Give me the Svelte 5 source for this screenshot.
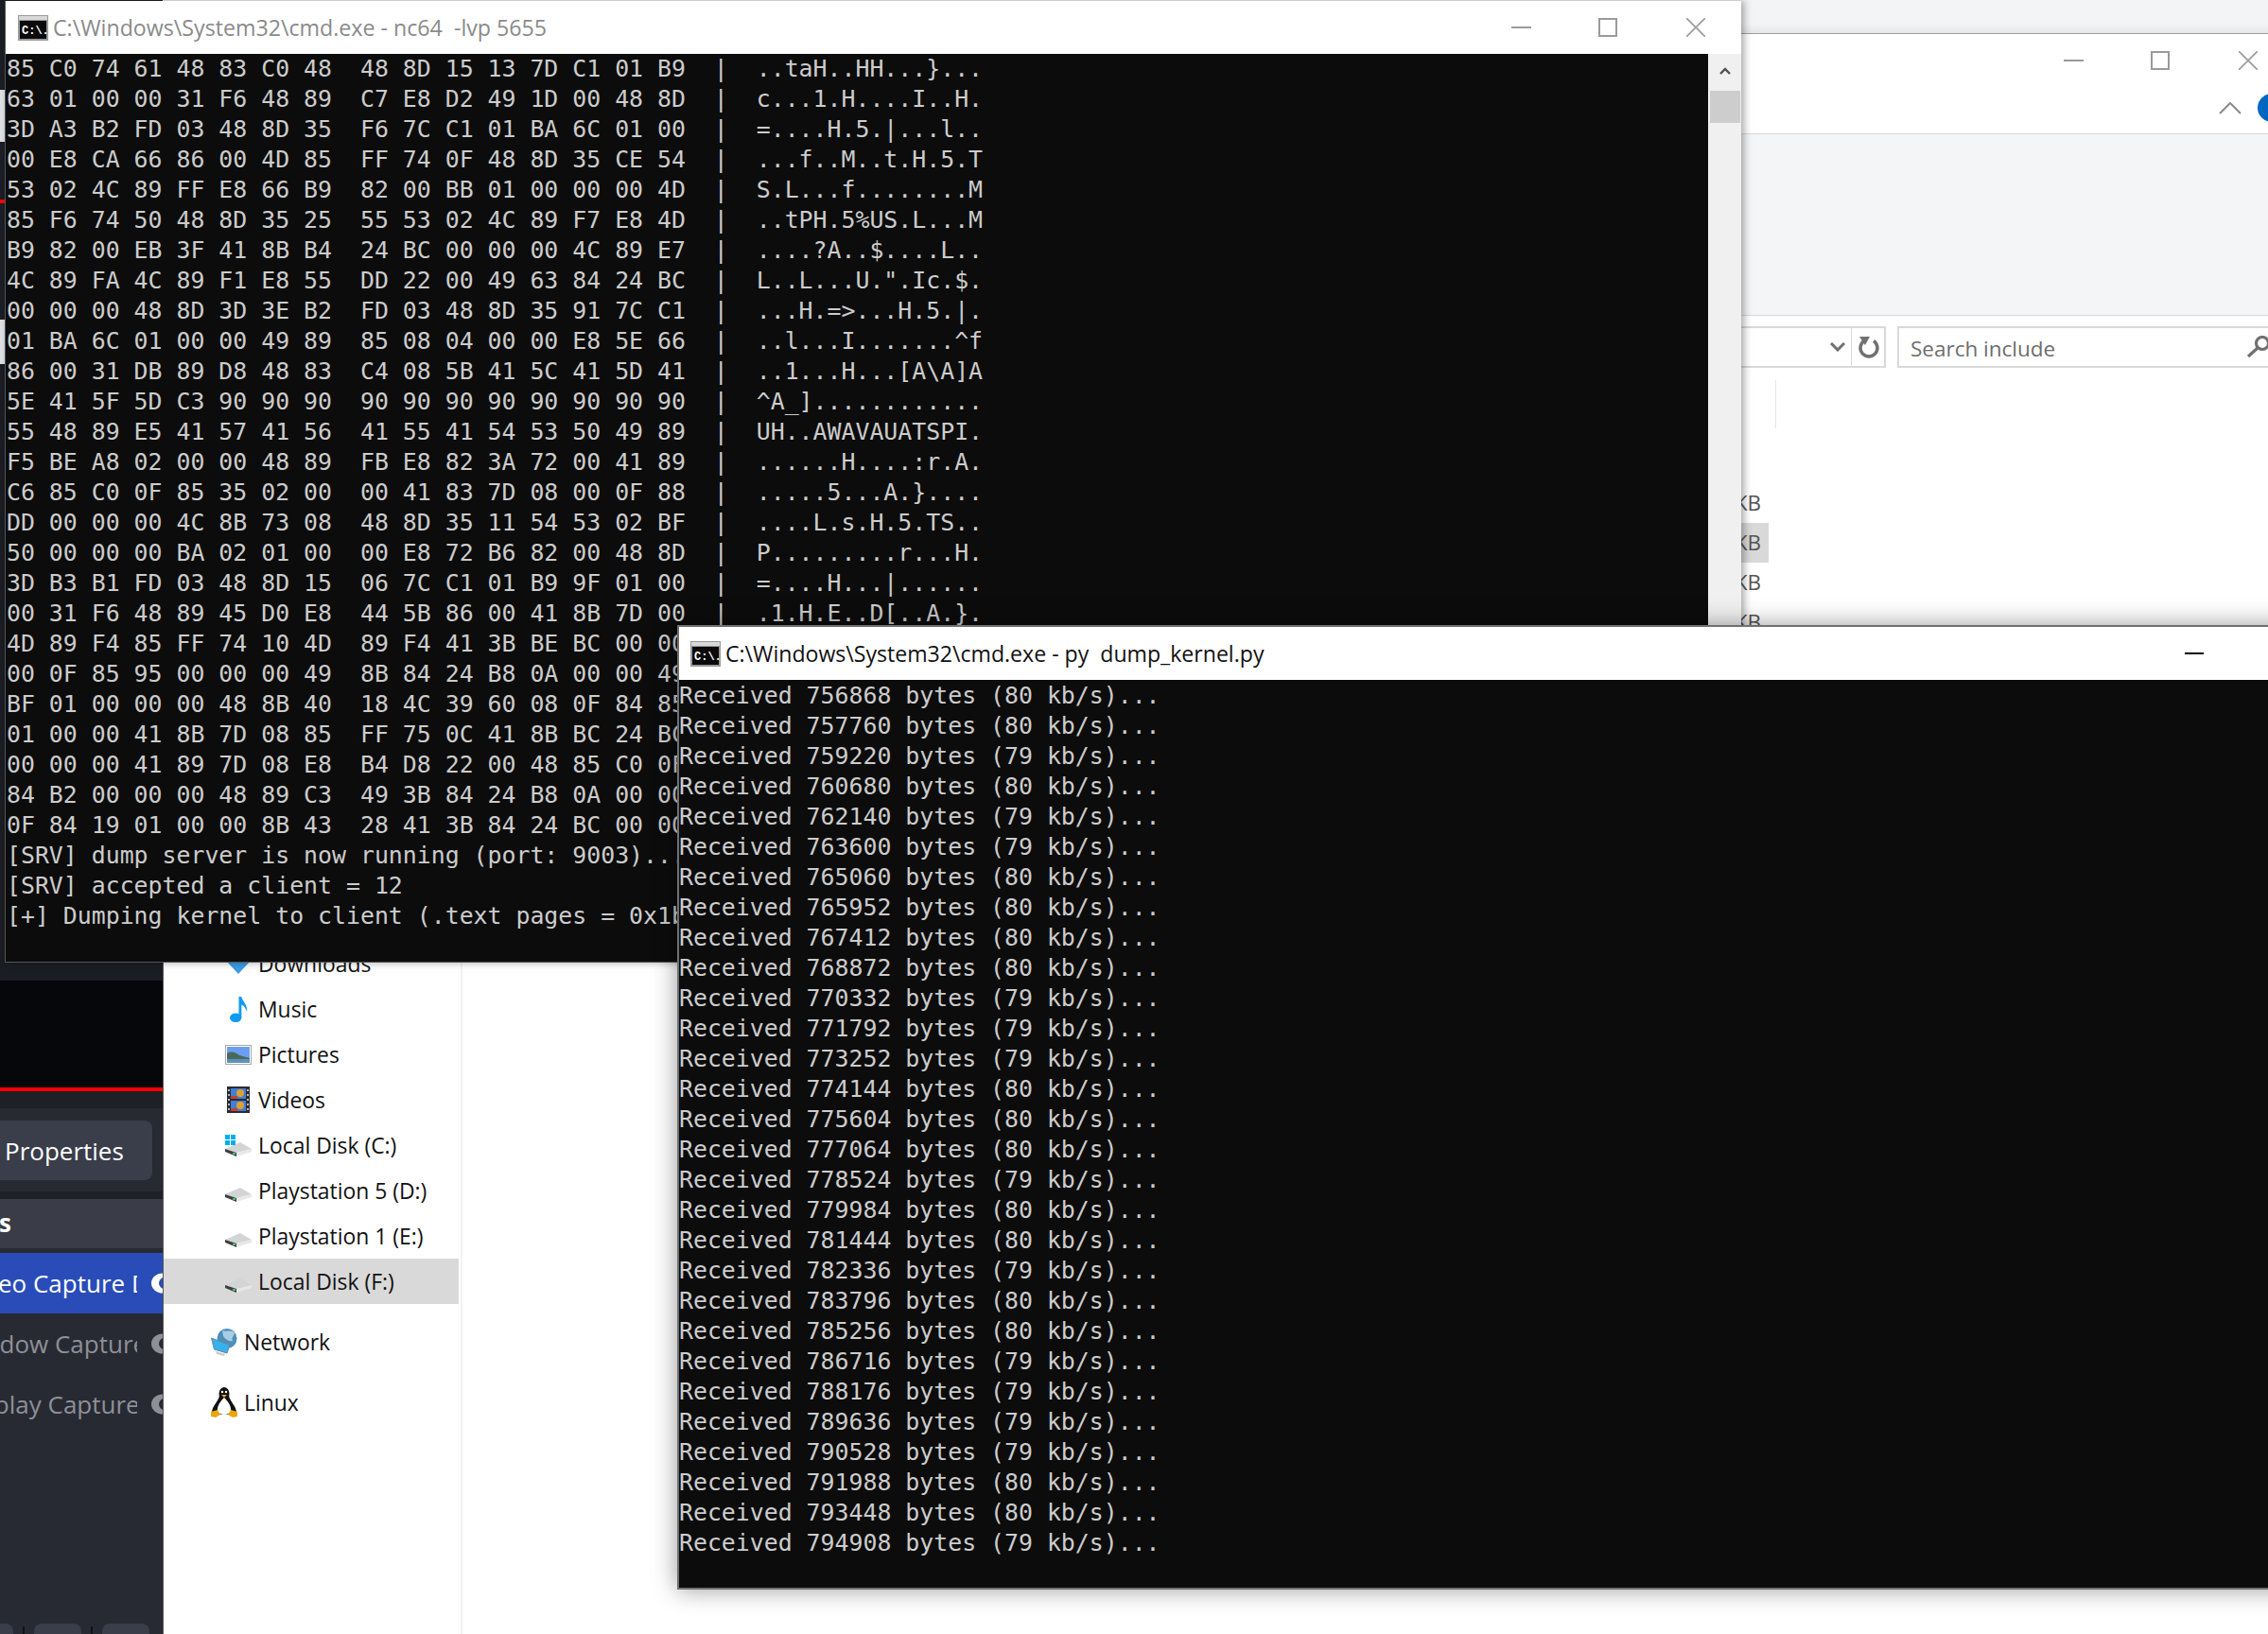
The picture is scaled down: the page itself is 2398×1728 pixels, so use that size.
<script>
	const hexRows = [
		['85 C0 74 61 48 83 C0 48  48 8D 15 13 7D C1 01 B9', '..taH..HH...}...'],
		['63 01 00 00 31 F6 48 89  C7 E8 D2 49 1D 00 48 8D', 'c...1.H....I..H.'],
		['3D A3 B2 FD 03 48 8D 35  F6 7C C1 01 BA 6C 01 00', '=....H.5.|...l..'],
		['00 E8 CA 66 86 00 4D 85  FF 74 0F 48 8D 35 CE 54', '...f..M..t.H.5.T'],
		['53 02 4C 89 FF E8 66 B9  82 00 BB 01 00 00 00 4D', 'S.L...f........M'],
		['85 F6 74 50 48 8D 35 25  55 53 02 4C 89 F7 E8 4D', '..tPH.5%US.L...M'],
		['B9 82 00 EB 3F 41 8B B4  24 BC 00 00 00 4C 89 E7', '....?A..$....L..'],
		['4C 89 FA 4C 89 F1 E8 55  DD 22 00 49 63 84 24 BC', 'L..L...U.".Ic.$.'],
		['00 00 00 48 8D 3D 3E B2  FD 03 48 8D 35 91 7C C1', '...H.=>...H.5.|.'],
		['01 BA 6C 01 00 00 49 89  85 08 04 00 00 E8 5E 66', '..l...I.......^f'],
		['86 00 31 DB 89 D8 48 83  C4 08 5B 41 5C 41 5D 41', '..1...H...[A\\A]A'],
		['5E 41 5F 5D C3 90 90 90  90 90 90 90 90 90 90 90', '^A_]............'],
		['55 48 89 E5 41 57 41 56  41 55 41 54 53 50 49 89', 'UH..AWAVAUATSPI.'],
		['F5 BE A8 02 00 00 48 89  FB E8 82 3A 72 00 41 89', '......H....:r.A.'],
		['C6 85 C0 0F 85 35 02 00  00 41 83 7D 08 00 0F 88', '.....5...A.}....'],
		['DD 00 00 00 4C 8B 73 08  48 8D 35 11 54 53 02 BF', '....L.s.H.5.TS..'],
		['50 00 00 00 BA 02 01 00  00 E8 72 B6 82 00 48 8D', 'P.........r...H.'],
		['3D B3 B1 FD 03 48 8D 15  06 7C C1 01 B9 9F 01 00', '=....H...|......'],
		['00 31 F6 48 89 45 D0 E8  44 5B 86 00 41 8B 7D 00', '.1.H.E..D[..A.}.'],
		['4D 89 F4 85 FF 74 10 4D  89 F4 41 3B BE BC 00 00', ''],
		['00 0F 85 95 00 00 00 49  8B 84 24 B8 0A 00 00 49', ''],
		['BF 01 00 00 00 48 8B 40  18 4C 39 60 08 0F 84 85', ''],
		['01 00 00 41 8B 7D 08 85  FF 75 0C 41 8B BC 24 BC', ''],
		['00 00 00 41 89 7D 08 E8  B4 D8 22 00 48 85 C0 0F', ''],
		['84 B2 00 00 00 48 89 C3  49 3B 84 24 B8 0A 00 00', ''],
		['0F 84 19 01 00 00 8B 43  28 41 3B 84 24 BC 00 00', '']
	];

	const srvLines = [
		'[SRV] dump server is now running (port: 9003)...',
		'[SRV] accepted a client = 12',
		'[+] Dumping kernel to client (.text pages = 0x1b00)'
	];

	const received = [
		[756868, 80], [757760, 80], [759220, 79], [760680, 80], [762140, 79], [763600, 79],
		[765060, 80], [765952, 80], [767412, 80], [768872, 80], [770332, 79], [771792, 79],
		[773252, 79], [774144, 80], [775604, 80], [777064, 80], [778524, 79], [779984, 80],
		[781444, 80], [782336, 79], [783796, 80], [785256, 80], [786716, 79], [788176, 79],
		[789636, 79], [790528, 79], [791988, 80], [793448, 80], [794908, 79]
	];

	const navItems = [
		{ name: 'Downloads', icon: 'downloads' },
		{ name: 'Music', icon: 'music' },
		{ name: 'Pictures', icon: 'pictures' },
		{ name: 'Videos', icon: 'videos' },
		{ name: 'Local Disk (C:)', icon: 'system' },
		{ name: 'Playstation 5 (D:)', icon: 'drive' },
		{ name: 'Playstation 1 (E:)', icon: 'drive' },
		{ name: 'Local Disk (F:)', icon: 'drive', selected: true }
	];

	const sources = [
		{ name: 'Video Capture Device', cls: 'active', indent: -40 },
		{ name: 'Window Capture', cls: '', indent: -47 },
		{ name: 'Display Capture', cls: '', indent: -44 }
	];
</script>

{#snippet cmdIcon()}
	<svg class="cmd-icon" viewBox="0 0 32 27">
		<rect width="32" height="27" fill="#9a9a9a" />
		<rect x="1" y="1" width="30" height="4" fill="#d8d8d8" />
		<rect x="2" y="6" width="28" height="19" fill="#0a0a0a" />
		<text x="4" y="20" class="cmd-glyph">C:\.</text>
	</svg>
{/snippet}

{#snippet driveIcon()}
	<svg class="icon drive" viewBox="0 0 28 15">
		<polygon points="0,7 16,0 28,7 12,11" fill="#d2d4d6" />
		<polygon points="12,11 28,7 28,10 12,15" fill="#e6e7e8" />
		<polygon points="0,7 12,11 12,15 0,10" fill="#3d4040" />
		<rect x="8" y="11" width="3" height="2" fill="#4cc36a" />
	</svg>
{/snippet}

<div class="desktop">
	<!-- obs, mostly hidden behind the consoles -->
	<aside class="obs">
		<div class="obs-top"></div>
		<div class="obs-chunk first"></div>
		<div class="obs-top second"></div>
		<div class="red-mark"></div>
		<div class="obs-top third"></div>
		<div class="obs-chunk last"></div>
		<div class="obs-top fourth"></div>
		<div class="preview"></div>
		<div class="red-line"></div>
		<div class="obs-gap"></div>
		<div class="toolbar"><button class="props">Properties</button></div>
		<div class="obs-gap small"></div>
		<div class="dock-title">s</div>
		<div class="source-list">
			{#each sources as s}
				<div class="source {s.cls}">
					<div class="source-name"><span style="margin-left: {s.indent}px">{s.name}</span></div>
					<svg class="eye" viewBox="0 0 24 24">
						<ellipse cx="12" cy="12" rx="12" ry="10.5" fill="currentColor" />
						<circle cx="14" cy="12" r="6" />
					</svg>
				</div>
			{/each}
		</div>
		<div class="obs-foot">
			<span class="foot-btn a"></span><i></i>
			<span class="foot-btn b"></span><i></i>
			<span class="foot-btn c"></span>
		</div>
	</aside>

	<!-- strip of another window above explorer -->
	<div class="behind"></div>

	<section class="explorer">
		<header class="ex-title">
			<div class="ex-controls">
				<span class="ctl-min"></span>
				<span class="ctl-max"></span>
				<svg class="ctl-close" viewBox="0 0 20 20"><path d="M0 0 L20 20 M20 0 L0 20" /></svg>
			</div>
			<div class="ex-help">
				<svg class="collapse" viewBox="0 0 24 13"><path d="M1 12 L12 1 L23 12" /></svg>
				<span class="help-dot"></span>
			</div>
		</header>
		<div class="ribbon"></div>
		<div class="address">
			<div class="addr-box">
				<svg class="addr-chev" viewBox="0 0 16 10"><path d="M1 1 L8 8 L15 1" /></svg>
				<span class="addr-div"></span>
				<svg class="addr-refresh" viewBox="0 0 24 24">
					<path d="M17 5.5 A9 9 0 1 1 7 5.5" />
					<path class="fill" d="M2 1 L13 1 L8 10 Z" />
				</svg>
			</div>
			<div class="search-box">
				<span class="search-label">Search include</span>
				<svg class="search-icon" viewBox="0 0 28 24">
					<circle cx="17" cy="8" r="6.5" />
					<path d="M12 13 L2 22" />
				</svg>
			</div>
		</div>
		<div class="ex-body">
			<nav class="nav">
				{#each navItems as item}
					<div class="nav-row" class:selected={item.selected}>
						<span class="icon-box">
							{#if item.icon === 'downloads'}
								<svg class="icon shifted" viewBox="0 0 28 28">
									<rect x="9" y="0" width="10" height="12" fill="#1e88d8" />
									<polygon points="1,12 27,12 14,26" fill="#3b9ce8" />
								</svg>
							{:else if item.icon === 'music'}
								<svg class="icon note" viewBox="0 0 20 30">
									<ellipse cx="6.5" cy="24.5" rx="6.5" ry="5" fill="#0f9bf0" />
									<path d="M10 24 L10 1 L13 1 C13.500 6 20 9 19 18 C18 14 15.500 11 13 10 L13 24 Z" fill="#0f9bf0" />
								</svg>
							{:else if item.icon === 'pictures'}
								<svg class="icon" viewBox="0 0 28 21">
									<rect x="0.5" y="0.5" width="27" height="20" fill="#fff" stroke="#a8a8a8" />
									<rect x="2" y="2" width="24" height="17" fill="#6d9ff0" />
									<path d="M2 9 C7 6 11 8 15 11 L26 14 L26 15 L2 15 Z" fill="#476a60" />
									<rect x="2" y="15" width="24" height="4" fill="#5f92bb" />
								</svg>
							{:else if item.icon === 'videos'}
								<svg class="icon film" viewBox="0 0 24 28">
									<rect width="24" height="28" fill="#2b2b33" />
									<rect x="4" y="2" width="16" height="11" fill="#3f7fd8" />
									<rect x="4" y="15" width="16" height="11" fill="#3f7fd8" />
									<circle cx="14" cy="7" r="4" fill="#e0a030" />
									<circle cx="14" cy="20" r="4" fill="#e0a030" />
									<rect x="4" y="10" width="7" height="3" fill="#c8402f" />
									<rect x="4" y="23" width="7" height="3" fill="#c8402f" />
									<path d="M2 3 V5 M2 8 V10 M2 13 V15 M2 18 V20 M2 23 V25 M22 3 V5 M22 8 V10 M22 13 V15 M22 18 V20 M22 23 V25" stroke="#ddd" stroke-width="1.6" />
								</svg>
							{:else if item.icon === 'system'}
								<span class="sys-icon">
									{@render driveIcon()}
									<svg class="win-logo" viewBox="0 0 11 11">
										<rect width="5" height="5" fill="#00adef" /><rect x="6" width="5" height="5" fill="#00adef" />
										<rect y="6" width="5" height="5" fill="#00adef" /><rect x="6" y="6" width="5" height="5" fill="#00adef" />
									</svg>
								</span>
							{:else}
								{@render driveIcon()}
							{/if}
						</span>
						<span>{item.name}</span>
					</div>
				{/each}
				<div class="nav-row top">
					<span class="icon-box">
						<svg class="icon" viewBox="0 0 28 29">
							<circle cx="17" cy="10.500" r="10.500" fill="#4d8fbb" />
							<path d="M12 2 C16 4 20 1 25 4 C25 8 21 9 23 13 C19 14 15 11 13 8 Z" fill="#a9cde3" />
							<polygon points="0.500,10 20,17.500 17,26 3.500,22" fill="#35b2ee" stroke="#6f8596" />
							<polygon points="5,24 15,27 14,29 6,27" fill="#c9ccd0" />
						</svg>
					</span>
					<span>Network</span>
				</div>
				<div class="nav-row top">
					<span class="icon-box">
						<svg class="icon" viewBox="0 0 28 32">
							<path d="M9 9 C8 15 1 20 1 27 L6 29 L22 29 L27 27 C27 20 20 15 19 9 Z" fill="#111" />
							<ellipse cx="14" cy="7" rx="5.500" ry="7" fill="#111" />
							<path d="M14 11 C10 15 6 20 7 26 C9 30 19 30 21 26 C22 20 18 15 14 11 Z" fill="#fff" />
							<circle cx="12" cy="5" r="1.200" fill="#fff" />
							<circle cx="16" cy="5" r="1.200" fill="#fff" />
							<polygon points="11,8 17,8 14,11" fill="#e8a80c" />
							<path d="M0 26 L7 24 L10 29 L5 32 L0 31 Z" fill="#e8a80c" />
							<path d="M28 26 L21 24 L18 29 L23 32 L28 31 Z" fill="#e8a80c" />
						</svg>
					</span>
					<span>Linux</span>
				</div>
			</nav>
			<div class="files">
				<div class="col-head"></div>
				<div class="sizes">
					<div class="size">KB</div>
					<div class="size hot">KB</div>
					<div class="size">KB</div>
					<div class="size">KB</div>
				</div>
			</div>
		</div>
	</section>

	<section class="console-win one">
		<header class="win-title">
			{@render cmdIcon()}
			<span class="win-name">C:\Windows\System32\cmd.exe - nc64  -lvp 5655</span>
			<div class="win-controls">
				<span class="ctl-min"></span>
				<span class="ctl-max"></span>
				<svg class="ctl-close" viewBox="0 0 20 20"><path d="M0 0 L20 20 M20 0 L0 20" /></svg>
			</div>
		</header>
		<div class="win-body">
			<div class="console">
				{#each hexRows as row}
					<div class="line">{row[0]}{row[1] ? '  |  ' + row[1] : ''}</div>
				{/each}
				{#each srvLines as line}
					<div class="line">{line}</div>
				{/each}
			</div>
			<div class="scrollbar">
				<svg class="scroll-up" viewBox="0 0 12 8"><path d="M1 7 L6 2 L11 7" /></svg>
				<div class="thumb"></div>
			</div>
		</div>
	</section>

	<section class="console-win two">
		<header class="win-title">
			{@render cmdIcon()}
			<span class="win-name">C:\Windows\System32\cmd.exe - py  dump_kernel.py</span>
			<span class="two-min"></span>
		</header>
		<div class="console">
			{#each received as r}
				<div class="line">Received {r[0]} bytes ({r[1]} kb/s)...</div>
			{/each}
		</div>
	</section>
</div>

<style>
	:global(body) {
		margin: 0;
		background: #fff;
	}

	.desktop {
		position: relative;
		width: 2398px;
		height: 1728px;
		overflow: hidden;
		font-family: "Open Sans", "Noto Sans", sans-serif;
	}

	/* obs */
	.obs {
		position: absolute;
		left: 0;
		top: 0;
		width: 172px;
		height: 1728px;
		display: flex;
		flex-direction: column;
		background: #272a33;
		overflow: hidden;
		color: #fff;
		font-size: 26px;
	}
	.obs-top { height: 95px; background: #1c1e25; flex: none; }
	.obs-top.second { height: 61px; }
	.obs-top.third { height: 123px; }
	.obs-top.fourth { height: 652px; background: #1b1d24; }
	.obs-chunk { flex: none; background: #dfe3e6; }
	.obs-chunk.first { height: 55px; }
	.obs-chunk.last { height: 47px; }
	.red-mark { height: 4px; background: #f00; flex: none; }
	.preview { height: 113px; background: #05070a; flex: none; }
	.red-line { height: 4px; background: #f00; flex: none; }
	.obs-gap { height: 18px; background: #1e2027; flex: none; }
	.obs-gap.small { height: 8px; }
	.toolbar {
		height: 88px;
		flex: none;
		padding-top: 13px;
		box-sizing: border-box;
	}
	.props {
		display: block;
		width: 161px;
		height: 63px;
		margin-left: 0;
		padding: 0 0 0 5px;
		border: 0;
		border-radius: 0 8px 8px 0;
		background: #3a3d4a;
		color: #fff;
		font: inherit;
		text-align: left;
	}
	.dock-title {
		height: 52px;
		line-height: 50px;
		flex: none;
		background: #3a3d48;
		font-weight: 700;
		margin-left: -1px;
	}
	.source-list {
		flex: 1;
		padding-top: 5px;
	}
	.source {
		display: flex;
		align-items: center;
		height: 64px;
		color: #8f9097;
	}
	.source.active {
		background: #2a4cb8;
		color: #fff;
	}
	.source-name {
		width: 145px;
		flex: none;
		overflow: hidden;
		white-space: nowrap;
	}
	.eye {
		width: 24px;
		height: 24px;
		margin-left: 15px;
		flex: none;
	}
	.eye circle { fill: #272a33; }
	.source.active .eye circle { fill: #2a4cb8; }
	.obs-foot {
		display: flex;
		align-items: flex-end;
		height: 11px;
		flex: none;
	}
	.foot-btn {
		height: 11px;
		background: #3a3d4a;
		border-radius: 8px 8px 0 0;
		flex: none;
	}
	.foot-btn.a { width: 14px; border-top-left-radius: 0; }
	.foot-btn.b { width: 50px; }
	.foot-btn.c { width: 50px; }
	.obs-foot i {
		width: 2px;
		height: 8px;
		margin: 0 10px;
		background: #111;
		flex: none;
	}

	.behind {
		position: absolute;
		left: 172px;
		top: 0;
		right: 0;
		height: 36px;
		background: linear-gradient(#f3f4f6 70%, #e4e5e7);
	}

	/* explorer */
	.explorer {
		position: absolute;
		left: 172px;
		top: 35px;
		right: 0;
		bottom: 0;
		display: flex;
		flex-direction: column;
		background: #fff;
		border-top: 1px solid #a0a0a0;
		border-left: 1px solid #555;
		color: #111;
	}
	.ex-title {
		height: 106px;
		flex: none;
		box-sizing: border-box;
		padding-top: 18px;
		border-bottom: 1px solid #d9d9d9;
		display: flex;
		flex-direction: column;
		align-items: flex-end;
	}
	.ex-controls {
		display: flex;
		align-items: center;
		gap: 71px;
		padding-right: 11px;
		height: 20px;
	}
	.ctl-max { margin-right: 2px; }
	.ctl-min {
		width: 21px;
		height: 2px;
		background: #9a9a9a;
		flex: none;
	}
	.ctl-max {
		width: 16px;
		height: 16px;
		border: 2px solid #9a9a9a;
		flex: none;
	}
	.ctl-close {
		width: 20px;
		height: 20px;
		flex: none;
	}
	.ctl-close path {
		stroke: #9a9a9a;
		stroke-width: 1.6;
		fill: none;
	}
	.ex-help {
		display: flex;
		align-items: center;
		margin-top: 25px;
		margin-right: -19px;
		gap: 17px;
	}
	.collapse {
		width: 24px;
		height: 13px;
	}
	.collapse path {
		stroke: #8a8a8a;
		stroke-width: 2;
		fill: none;
	}
	.help-dot {
		width: 30px;
		height: 30px;
		border-radius: 50%;
		background: #0067c0;
		flex: none;
	}
	.ribbon {
		height: 192px;
		flex: none;
		box-sizing: border-box;
		background: #f4f5f7;
		border-bottom: 1px solid #d9d9d9;
	}
	.address {
		height: 68px;
		flex: none;
		box-sizing: border-box;
		padding-top: 11px;
		display: flex;
		justify-content: flex-end;
	}
	.addr-box {
		height: 44px;
		box-sizing: border-box;
		border: 2px solid #d9d9d9;
		border-left: 0;
		display: flex;
		align-items: center;
		width: 300px;
		justify-content: flex-end;
		margin-right: 12px;
	}
	.addr-chev {
		width: 16px;
		height: 10px;
		margin-right: 6px;
	}
	.addr-chev path {
		stroke: #707070;
		stroke-width: 3;
		fill: none;
	}
	.addr-div {
		width: 1px;
		height: 100%;
		background: #d9d9d9;
	}
	.addr-refresh {
		width: 24px;
		height: 24px;
		margin: 0 4px 0 6px;
	}
	.addr-refresh path {
		stroke: #707070;
		stroke-width: 3.4;
		fill: none;
	}
	.addr-refresh path.fill {
		fill: #707070;
		stroke: none;
	}
	.search-box {
		width: 392px;
		height: 44px;
		box-sizing: border-box;
		border: 2px solid #d9d9d9;
		border-right: 0;
		display: flex;
		align-items: center;
		justify-content: space-between;
		padding-left: 12px;
		font-size: 22.5px;
		color: #6d6d6d;
	}
	.search-label { padding-top: 3px; }
	.search-icon {
		width: 28px;
		height: 24px;
		margin-right: -5px;
	}
	.search-icon circle, .search-icon path {
		stroke: #707070;
		stroke-width: 3.2;
		fill: none;
	}
	.ex-body {
		flex: 1;
		display: flex;
		min-height: 0;
	}
	.nav {
		width: 316px;
		flex: none;
		box-sizing: border-box;
		padding-top: 593px;
		border-right: 2px solid #f2f2f2;
		font-size: 22.9px;
	}
	.nav-row {
		display: flex;
		align-items: center;
		height: 48px;
		width: 312px;
		padding-left: 63px;
		box-sizing: border-box;
		gap: 5px;
		white-space: nowrap;
	}
	.nav-row.selected { background: #d9d9d9; }
	.nav-row.top {
		padding-left: 48px;
		margin-top: 16px;
	}
	.icon-box {
		width: 32px;
		height: 40px;
		flex: none;
		display: flex;
		align-items: center;
		justify-content: center;
	}
	.icon { width: 28px; display: block; }
	.icon.note { width: 19px; }
	.icon.film { width: 24px; }
	.icon.shifted { margin-top: -2px; }
	.icon.drive { margin-top: 9px; }
	.sys-icon {
		position: relative;
		display: block;
		width: 28px;
	}
	.sys-icon .icon.drive { margin-top: 8px; }
	.win-logo {
		position: absolute;
		left: 0;
		top: 0;
		width: 11px;
		height: 11px;
	}
	.files {
		flex: 1;
		padding-left: 1211px;
	}
	.col-head {
		width: 178px;
		height: 51px;
		box-sizing: border-box;
		border-right: 1px solid #e5e5e5;
	}
	.sizes {
		width: 170px;
		padding-top: 58px;
	}
	.size {
		height: 42px;
		line-height: 42px;
		text-align: right;
		padding-right: 8px;
		font-size: 22.5px;
		color: #555;
	}
	.size.hot { background: #d9d9d9; }

	/* console windows */
	.console-win {
		position: absolute;
		display: flex;
		flex-direction: column;
		box-sizing: border-box;
		background: #0c0c0c;
		overflow: hidden;
	}
	.console-win.one {
		left: 5px;
		top: 1px;
		width: 1836px;
		height: 1017px;
		border-left: 1px solid #555;
		border-bottom: 1px solid #555;
		box-shadow: 3px 0 8px rgba(0, 0, 0, 0.35);
	}
	.console-win.two {
		left: 716px;
		top: 661px;
		width: 1720px;
		height: 1020px;
		border: 2px solid #707070;
		box-shadow: 0 0 24px rgba(0, 0, 0, 0.4);
	}
	.win-title {
		height: 56px;
		flex: none;
		display: flex;
		align-items: center;
		background: #fff;
		font-size: 23.2px;
		color: #8a8a8a;
		white-space: pre;
		padding-left: 13px;
		box-sizing: border-box;
	}
	.two .win-title {
		color: #111;
		padding-left: 12px;
		font-size: 23.1px;
	}
	.cmd-icon {
		width: 32px;
		height: 27px;
		margin-right: 5px;
		flex: none;
	}
	.cmd-glyph {
		font-family: "Liberation Mono", monospace;
		font-weight: 700;
		font-size: 12px;
		fill: #fff;
	}
	.win-name { flex: none; }
	.win-controls {
		margin-left: auto;
		display: flex;
		align-items: center;
		gap: 71px;
		padding-right: 38px;
	}
	.two-min {
		position: absolute;
		left: 1592px;
		top: 27px;
		width: 20px;
		height: 2px;
		background: #000;
	}
	.win-body {
		flex: 1;
		display: flex;
		min-height: 0;
	}
	.console {
		flex: 1;
		min-width: 0;
		overflow: hidden;
		padding-left: 1px;
		font-family: "DejaVu Sans Mono", monospace;
		font-size: 24.85px;
		line-height: 32px;
		color: #cccccc;
	}
	.line { white-space: pre; }
	.two .console { padding-top: 1px; padding-left: 0; }
	.scrollbar {
		width: 35px;
		flex: none;
		background: #f0f0f0;
		display: flex;
		flex-direction: column;
		align-items: center;
		padding-top: 14px;
	}
	.scroll-up {
		width: 12px;
		height: 8px;
	}
	.scroll-up path {
		stroke: #505050;
		stroke-width: 2.4;
		fill: none;
	}
	.thumb {
		width: 32px;
		height: 34px;
		margin-top: 17px;
		background: #cdcdcd;
	}
</style>
